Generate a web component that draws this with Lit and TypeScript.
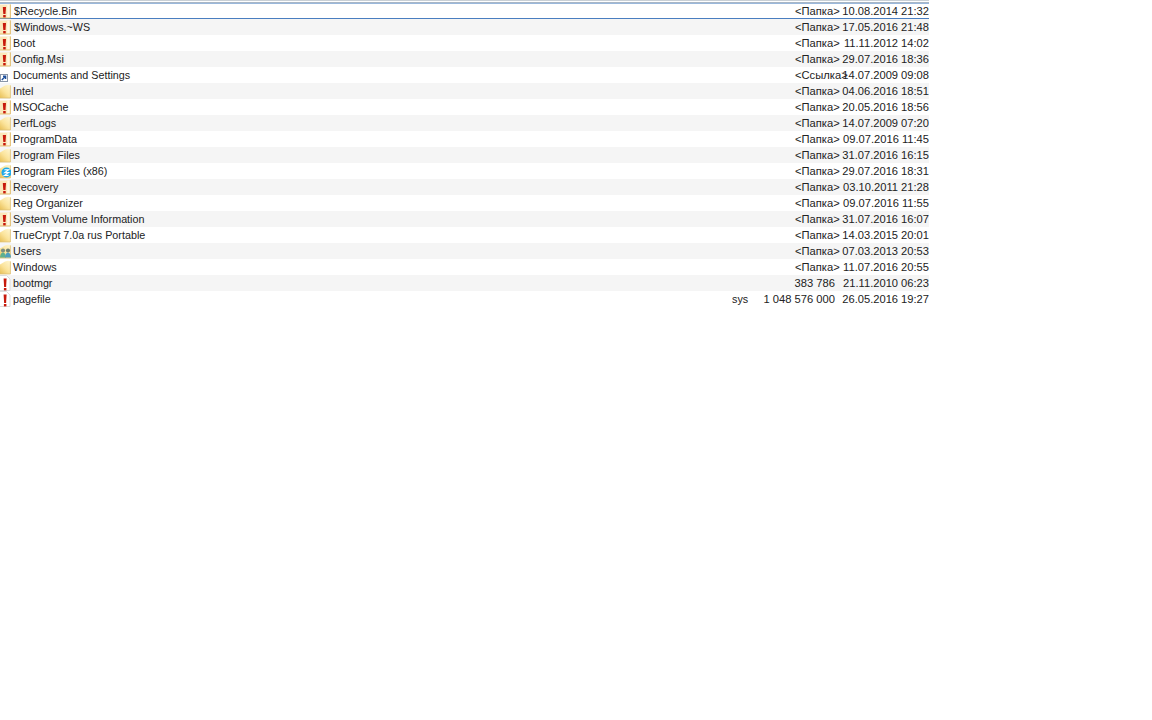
import { LitElement, html, css, svg } from "lit";
import { customElement } from "lit/decorators.js";

type Kind = "lock" | "folder" | "link" | "skype" | "users" | "file";
interface Row { n: string; k: Kind; e?: string; s: string; d: string; inset?: boolean; }

const rows: Row[] = [
  { n: "$Recycle.Bin", k: "lock", s: "<Папка>", d: "10.08.2014 21:32", inset: true },
  { n: "$Windows.~WS", k: "lock", s: "<Папка>", d: "17.05.2016 21:48", inset: true },
  { n: "Boot", k: "lock", s: "<Папка>", d: "11.11.2012 14:02" },
  { n: "Config.Msi", k: "lock", s: "<Папка>", d: "29.07.2016 18:36" },
  { n: "Documents and Settings", k: "link", s: "<Ссылка>", d: "14.07.2009 09:08" },
  { n: "Intel", k: "folder", s: "<Папка>", d: "04.06.2016 18:51" },
  { n: "MSOCache", k: "lock", s: "<Папка>", d: "20.05.2016 18:56" },
  { n: "PerfLogs", k: "folder", s: "<Папка>", d: "14.07.2009 07:20" },
  { n: "ProgramData", k: "lock", s: "<Папка>", d: "09.07.2016 11:45" },
  { n: "Program Files", k: "folder", s: "<Папка>", d: "31.07.2016 16:15" },
  { n: "Program Files (x86)", k: "skype", s: "<Папка>", d: "29.07.2016 18:31" },
  { n: "Recovery", k: "lock", s: "<Папка>", d: "03.10.2011 21:28" },
  { n: "Reg Organizer", k: "folder", s: "<Папка>", d: "09.07.2016 11:55" },
  { n: "System Volume Information", k: "lock", s: "<Папка>", d: "31.07.2016 16:07" },
  { n: "TrueCrypt 7.0a rus Portable", k: "folder", s: "<Папка>", d: "14.03.2015 20:01" },
  { n: "Users", k: "users", s: "<Папка>", d: "07.03.2013 20:53" },
  { n: "Windows", k: "folder", s: "<Папка>", d: "11.07.2016 20:55" },
  { n: "bootmgr", k: "file", s: "383 786", d: "21.11.2010 06:23" },
  { n: "pagefile", k: "file", e: "sys", s: "1 048 576 000", d: "26.05.2016 19:27" },
];

const folder = svg`
  <defs><linearGradient id="fg" x1="0.9" y1="0" x2="0.1" y2="1">
    <stop offset="0" stop-color="#fff6cf"/><stop offset="0.55" stop-color="#fbe39a"/><stop offset="1" stop-color="#e9c25c"/>
  </linearGradient></defs>
  <path d="M0 5.5 L5 2.6 L8 1.8 L10.6 2.2 V15 H0 Z" fill="url(#fg)"/>
  <path d="M10.4 2.4 V15 H0" fill="none" stroke="#dcc07a" stroke-width="0.8"/>`;
const lockFolder = svg`
  <path d="M0 1.5 H10.5 V15 H0 Z" fill="#fbe7bb"/>
  <path d="M7.2 2 H9.8 V14.6 H7.2 Z" fill="#fff8e4"/>
  <path d="M10.4 1.4 V15 H0" fill="none" stroke="#dfb968" stroke-width="0.9"/>`;
const bang = svg`
  <path d="M2.8 4 H6 L5.5 11 H3.3 Z" fill="#c7190c"/>
  <rect x="3.2" y="12" width="2.5" height="2.4" fill="#c7190c"/>`;
const fileBang = svg`
  <path d="M3.6 3.5 H6.6 L6.1 12 H4.1 Z" fill="#c7190c"/>
  <rect x="3.9" y="13" width="2.5" height="2.4" fill="#c7190c"/>`;

function icon(k: Kind) {
  let body;
  switch (k) {
    case "lock": body = svg`${lockFolder}${bang}`; break;
    case "folder": body = folder; break;
    case "link": body = svg`
      <rect x="0.5" y="7.5" width="7" height="7" fill="#fff" stroke="#8a96a8"/>
      <path d="M1.8 13 L5 9.8 M3 9.3 H5.6 V12" fill="none" stroke="#1d4f9c" stroke-width="1.4"/>`; break;
    case "skype": body = svg`${folder}
      <circle cx="6.5" cy="9.5" r="5" fill="#1fa8e8"/>
      <path d="M4.4 6.8 H8.6 L4.8 9.6 H8.6 L4.4 12.4 H8.6" fill="none" stroke="#fff" stroke-width="1.1"/>`; break;
    case "users": body = svg`${folder}
      <circle cx="3" cy="7.5" r="2.1" fill="#7f8f80"/><circle cx="8" cy="7.5" r="2.1" fill="#6f7f70"/>
      <path d="M0 14.5 Q0.5 9.5 3 9.5 Q5.5 9.5 6 14.5 Z" fill="#5fb090"/>
      <path d="M5 14.5 Q5.5 9.5 8 9.5 Q10.5 9.5 11 14.5 Z" fill="#4f9fc0"/>`; break;
    case "file": body = svg`
      <path d="M0 0.5 H6.5 L10 4 V15.5 H0" fill="#fff" stroke="#d4d4d4" stroke-width="0.8"/>
      ${fileBang}`; break;
  }
  return html`<svg class="icon" width="11" height="16" viewBox="0 0 11 16">${body}</svg>`;
}

@customElement("app-root")
export class AppRoot extends LitElement {
  static styles = css`
    :host { display: block; width: 1152px; height: 720px; background: #fff; overflow: hidden;
      font-family: "Liberation Sans", Arial, sans-serif; font-size: 10.75px; color: #222; }
    .list { width: 929px; }
    .topline { height: 3px; box-sizing: border-box; border-top: 1px solid #c9d0d6; border-bottom: 1px solid #a9b7c6; }
    .row { display: grid; grid-template-columns: 13px 719px 63px 40px 7px 87px; grid-template-rows: 16px;
      height: 16px; line-height: 16px; white-space: nowrap; box-sizing: border-box; }
    .row > * { grid-row: 1; }
    .row:nth-child(odd) { background: #f5f5f5; }
    .row.sel { background: #fff; box-shadow: inset 0 -1px 0 #4a7ec0, inset 0 1px 0 #9ab8dc; }
    .icon { display: block; grid-column: 1; }
    .name { grid-column: 2; }
    .name.inset { padding-left: 1px; }
    .ext { grid-column: 3; }
    .size { grid-column: 3 / 5; text-align: right; font-size: 11.2px; }
    .label { grid-column: 4 / 6; font-size: 11.2px; }
    .date { grid-column: 6; text-align: right; font-size: 11.15px; }
  `;
  render() {
    return html`
      <div class="list">
        <div class="topline"></div>
        ${rows.map((r, i) => html`
          <div class="row ${i === 0 ? "sel" : ""}">
            ${icon(r.k)}
            <div class="name ${r.inset ? "inset" : ""}">${r.n}</div>
            ${r.e ? html`<div class="ext">${r.e}</div>` : ""}
            ${r.s.startsWith("<")
              ? html`<div class="label">${r.s}</div>`
              : html`<div class="size">${r.s}</div>`}
            <div class="date">${r.d}</div>
          </div>`)}
      </div>`;
  }
}
